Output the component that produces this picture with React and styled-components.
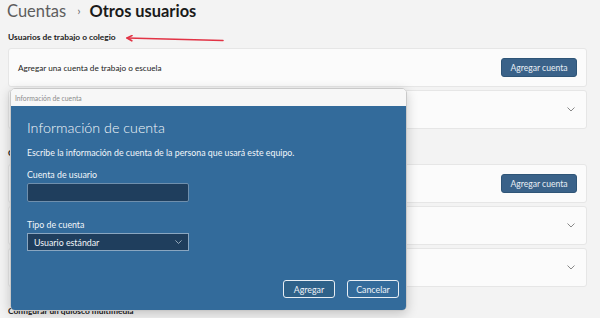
import React from 'react';
import styled, { createGlobalStyle } from 'styled-components';

const GlobalStyle = createGlobalStyle`
  html, body {
    margin: 0;
    padding: 0;
    background: #f3f3f3;
    overflow: hidden;
  }
  body {
    font-family: Lato, "Noto Sans", sans-serif;
    color: #1b1b1b;
  }
`;

function Chevron({ color = '#6a6a6a', size = 8 }) {
  return (
    <svg width={size} height={size * 0.6} viewBox="0 0 10 6" fill="none">
      <path d="M1 1 L5 5 L9 1" stroke={color} strokeWidth="1" strokeLinecap="round" strokeLinejoin="round" />
    </svg>
  );
}

function RedArrow() {
  return (
    <svg width="98" height="8" viewBox="0 0 98 8" fill="none">
      <path d="M1 3 L97 5.5" stroke="#e23345" strokeWidth="1.6" strokeLinecap="round" />
      <path d="M6 0.6 L1 3 L5.8 5.8" stroke="#e23345" strokeWidth="1.6" strokeLinecap="round" strokeLinejoin="round" />
    </svg>
  );
}

export default function App() {
  return (
    <>
      <GlobalStyle />
      <Page>
        <Breadcrumb>
          <Parent>Cuentas</Parent>
          <Sep>›</Sep>
          <Current>Otros usuarios</Current>
        </Breadcrumb>

        <SectionTitle>
          Usuarios de trabajo o colegio
          <RedArrow />
        </SectionTitle>
        <Group>
          <Card>
            <CardText>Agregar una cuenta de trabajo o escuela</CardText>
            <AccentButton>Agregar cuenta</AccentButton>
          </Card>
          <Card>
            <span />
            <Chevron />
          </Card>
        </Group>

        <SectionTitle $gap>Otros usuarios</SectionTitle>
        <Group>
          <Card>
            <CardText>Agregar otro usuario</CardText>
            <AccentButton>Agregar cuenta</AccentButton>
          </Card>
          <Card>
            <span />
            <Chevron />
          </Card>
          <Card>
            <span />
            <Chevron />
          </Card>
        </Group>

        <SectionTitle $gap>Configurar un quiosco multimedia</SectionTitle>

        <Dialog>
          <TitleBar>Información de cuenta</TitleBar>
          <DialogBody>
            <Heading>Información de cuenta</Heading>
            <Description>Escribe la información de cuenta de la persona que usará este equipo.</Description>
            <FieldLabel>Cuenta de usuario</FieldLabel>
            <TextBox />
            <FieldLabel $spaced>Tipo de cuenta</FieldLabel>
            <Select>
              <span>Usuario estándar</span>
              <Chevron color="#c9d6e2" size={7} />
            </Select>
            <Actions>
              <DialogButton $primary>Agregar</DialogButton>
              <DialogButton>Cancelar</DialogButton>
            </Actions>
          </DialogBody>
        </Dialog>
      </Page>
    </>
  );
}

const Page = styled.div`
  position: relative;
  width: 600px;
  height: 318px;
  padding: 0 13px 0 8px;
  box-sizing: border-box;
  display: flex;
  flex-direction: column;
`;

const Breadcrumb = styled.div`
  display: flex;
  align-items: baseline;
  height: 22px;
  margin-left: -1px;
  font-size: 16.5px;
  line-height: 22px;
`;

const Parent = styled.span`
  color: #5d5d5d;
`;

const Sep = styled.span`
  color: #6a6a6a;
  font-size: 12px;
  margin: 0 9px 0 11px;
  position: relative;
  top: -2px;
`;

const Current = styled.span`
  color: #1a1a1a;
  font-weight: 700;
  font-size: 16.4px;
`;

const SectionTitle = styled.div`
  display: flex;
  align-items: center;
  gap: 10px;
  height: 12px;
  margin-top: ${p => (p.$gap ? '18px' : '9px')};
  font-size: 8.4px;
  font-weight: 700;
  color: #1b1b1b;
  svg {
    margin-top: 4px;
  }
`;

const Group = styled.div`
  display: flex;
  flex-direction: column;
  gap: 3px;
  margin-top: 5px;
`;

const Card = styled.div`
  height: 39px;
  box-sizing: border-box;
  display: flex;
  align-items: center;
  justify-content: space-between;
  padding: 0 9px 0 9px;
  background: #fbfbfb;
  border: 1px solid #e6e6e6;
  border-radius: 3px;
  svg {
    margin-right: 2px;
  }
`;

const CardText = styled.span`
  font-size: 8.2px;
  color: #1b1b1b;
`;

const AccentButton = styled.button`
  width: 76px;
  height: 19px;
  padding: 0;
  border: 1px solid #2f5577;
  border-radius: 3px;
  background: #3a6289;
  color: #e9eff5;
  font-family: inherit;
  font-size: 8.6px;
`;

const Dialog = styled.div`
  position: absolute;
  left: 10px;
  top: 88px;
  width: 395px;
  height: 221px;
  display: flex;
  flex-direction: column;
  border: 1px solid #c9c9c9;
  border-radius: 5px;
  overflow: hidden;
  box-shadow: 0 3px 12px rgba(0, 0, 0, 0.2);
`;

const TitleBar = styled.div`
  height: 17px;
  flex: none;
  display: flex;
  align-items: center;
  padding-left: 4px;
  background: #f7f7f7;
  color: #8c8c8c;
  font-size: 6.8px;
`;

const DialogBody = styled.div`
  flex: 1;
  display: flex;
  flex-direction: column;
  padding: 12px 7px 0 16px;
  background: #336b9b;
  color: #f2f6fa;
`;

const Heading = styled.div`
  font-size: 14.3px;
  line-height: 20px;
  font-weight: 300;
`;

const Description = styled.div`
  margin-top: 9px;
  font-size: 8.8px;
  line-height: 12px;
`;

const FieldLabel = styled.div`
  margin-top: ${p => (p.$spaced ? '17px' : '10px')};
  font-size: 8.8px;
  line-height: 12px;
`;

const TextBox = styled.div`
  margin-top: 2px;
  width: 162px;
  height: 19px;
  box-sizing: border-box;
  background: #1f3e5d;
  border: 1px solid #6f8fad;
  border-radius: 2px;
`;

const Select = styled.div`
  margin-top: 2px;
  width: 162px;
  height: 18px;
  box-sizing: border-box;
  display: flex;
  align-items: center;
  justify-content: space-between;
  padding: 0 6px 0 6px;
  background: #1f3e5d;
  border: 1px solid #8aa6c0;
  font-size: 8.8px;
`;

const Actions = styled.div`
  display: flex;
  justify-content: flex-end;
  gap: 12px;
  margin-top: 29px;
`;

const DialogButton = styled.button`
  width: 52px;
  height: 18px;
  padding: 0;
  border: 1px solid #e8eef4;
  border-radius: 3px;
  background: ${p => (p.$primary ? '#2e6189' : 'transparent')};
  color: #eef3f8;
  font-family: inherit;
  font-size: 8.8px;
`;
